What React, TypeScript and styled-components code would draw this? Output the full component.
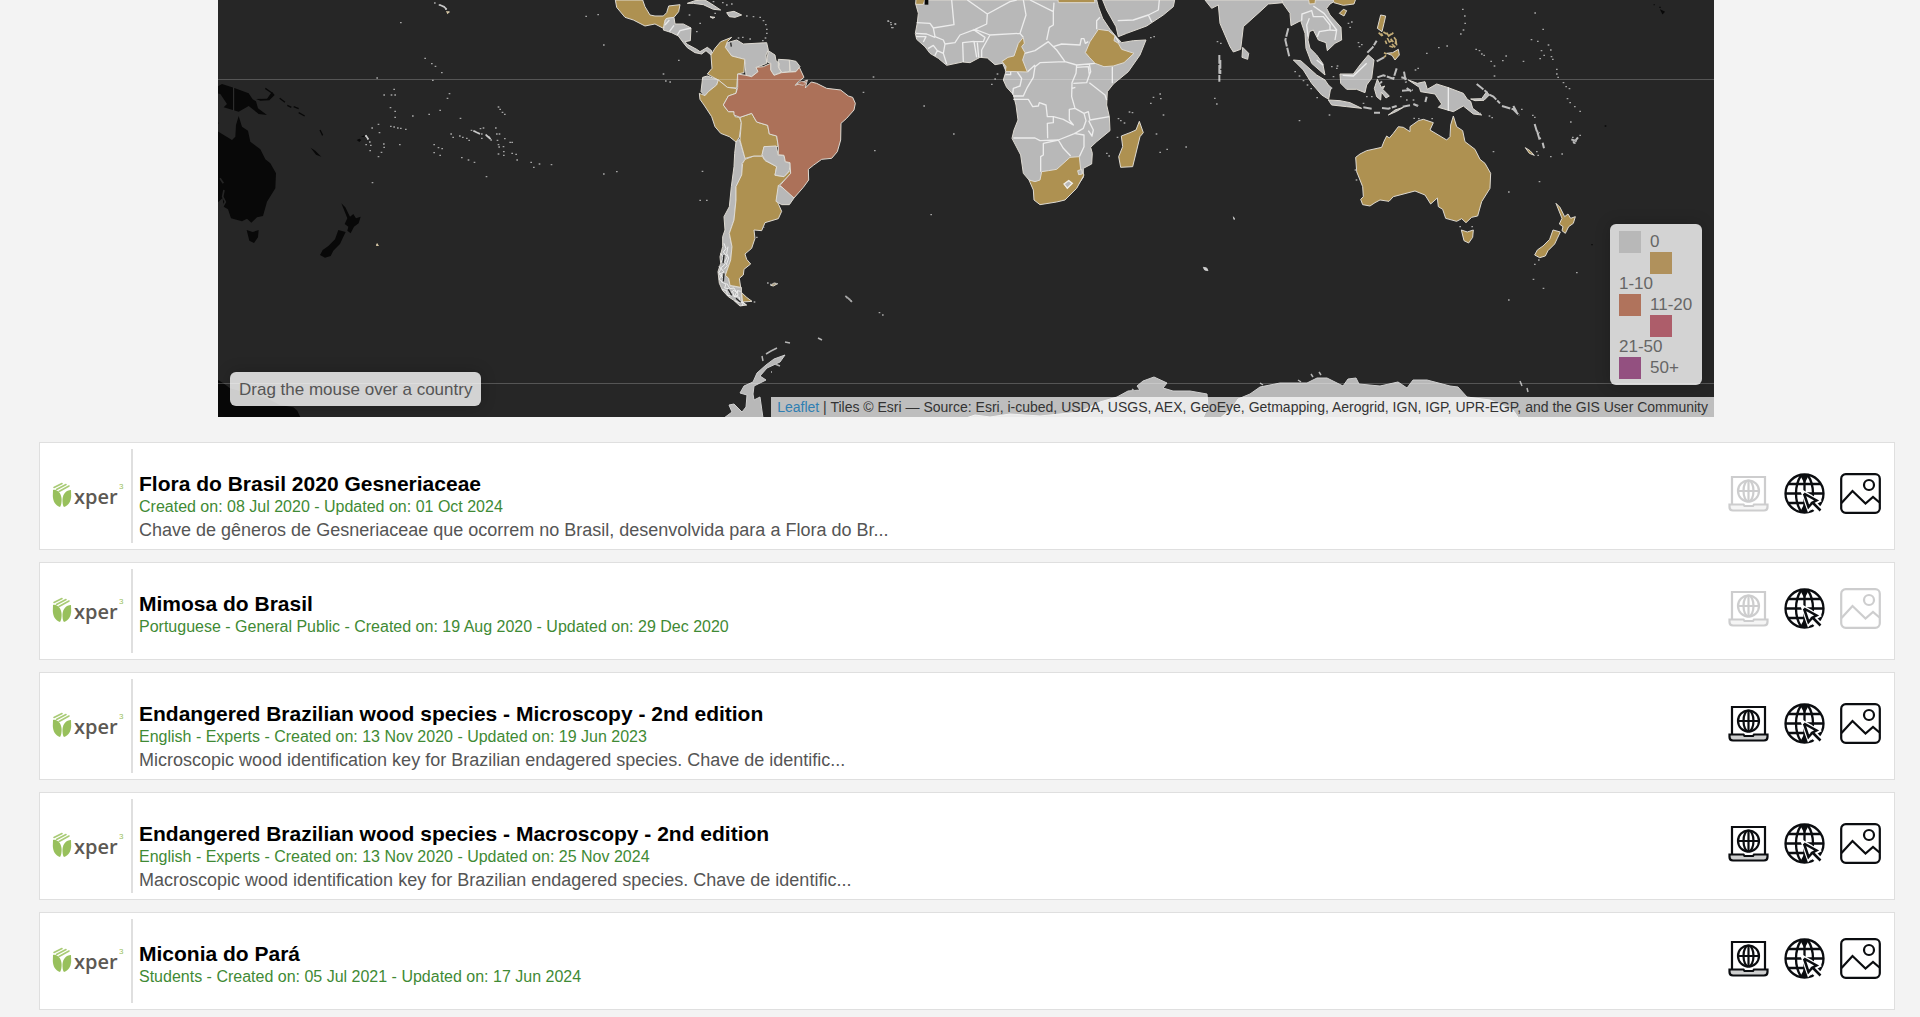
import React from "react";
import styled, { createGlobalStyle } from "styled-components";

const GlobalStyle = createGlobalStyle`
  * { box-sizing: border-box; }
  body {
    margin: 0;
    background: #f3f3f3;
    font-family: "Liberation Sans", Arial, Helvetica, sans-serif;
    color: #555;
  }
`;

const Page = styled.main`
  padding: 0 19px 7px 31px;
`;

const MapFrame = styled.section`
  position: relative;
  width: 80%;
  height: 417px;
  margin: 0 auto 25px;
  overflow: hidden;
  background: #262626;
  font-size: 17px;
`;

const MapCanvas = styled.svg`
  display: block;
  width: 100%;
  height: 100%;
`;

const MapPanel = styled.div`
  position: absolute;
  border-radius: 6px;
  background: rgba(255, 255, 255, 0.8);
  box-shadow: 0 0 16px rgba(0, 0, 0, 0.2);
`;

const CountryInfo = styled(MapPanel)`
  left: 12px;
  bottom: 11px;
  padding: 7px 9px 6px;
  line-height: 21px;
`;

const Legend = styled(MapPanel)`
  right: 12px;
  bottom: 32px;
  width: 92px;
  padding: 7px 9px;
  display: grid;
  grid-template-columns: 21px 1fr;
  column-gap: 10px;
  grid-auto-rows: 21px;
  line-height: 21px;
  color: #666;
  white-space: nowrap;
`;

const Swatch = styled.span<{ $color: string; $column: number }>`
  grid-column: ${(p) => p.$column};
  width: 22px;
  height: 22px;
  background: ${(p) => p.$color};
`;

const LegendLabel = styled.span<{ $full?: boolean }>`
  grid-column: ${(p) => (p.$full ? "1 / 3" : "2")};
`;

const Attribution = styled.div`
  position: absolute;
  right: 0;
  bottom: 0;
  padding: 1px 6px 0;
  background: rgba(255, 255, 255, 0.7);
  color: #333;
  font-size: 14px;
  line-height: 19px;
  white-space: nowrap;
  a { color: #2f7fb3; text-decoration: none; }
`;

const CardList = styled.ul`
  display: flex;
  flex-direction: column;
  gap: 12px;
  margin: 0 6px 0 8px;
  padding: 0;
  list-style: none;
`;

const Card = styled.li`
  display: flex;
  min-height: 98px;
  padding: 6px 13px 6px 0;
  border: 1px solid #dfdfdf;
  background: #fff;
`;

const LogoCell = styled.div`
  display: flex;
  align-items: center;
  justify-content: center;
  width: 93px;
  padding-left: 5px;
  border-right: 2px solid #dfdfdf;
`;

const Logo = styled.svg`
  width: 72px;
  height: 30px;
  overflow: visible;
`;

const CardBody = styled.div`
  flex: 1;
  padding: 23px 6px 1px;
`;

const CardTitle = styled.h3`
  margin: 0;
  color: #000;
  font-size: 21px;
  line-height: 24px;
`;

const CardMeta = styled.p`
  margin: 0;
  color: #3f8a35;
  font-size: 16px;
  line-height: 22px;
`;

const CardText = styled.p`
  margin: 0;
  font-size: 18px;
  line-height: 24px;
`;

const Actions = styled.div`
  display: flex;
  align-items: center;
  gap: 15px;
  padding-bottom: 5px;
`;

const IconButton = styled.button`
  width: 41px;
  height: 41px;
  padding: 0;
  border: 0;
  background: none;
  color: #0b0d10;
  cursor: pointer;
  svg { display: block; width: 100%; height: 100%; }
  &:disabled { opacity: 0.2; cursor: default; }
`;

const GREY = "#b8b8b8";
const GOLD = "#ae9151";
const CLAY = "#ac7159";

const AUSTRALIA =
  "M527 472L540 462 560 452 605 442 612 424 620 408 628 414 640 400 655 380 670 382 690 395 690 380 715 362 730 358 760 368 750 390 800 420 810 410 812 375 820 348 830 380 848 392 855 425 885 448 900 478 915 490 932 520 930 565 905 605 893 648 875 652 858 668 845 656 830 664 797 655 788 628 775 620 772 594 752 612 735 585 705 573 640 590 627 604 600 600 585 608 570 618 548 614 542 598 550 590 548 560 530 515ZM844 690L862 696 880 690 878 712 866 729 852 722Z";
const NEW_ZEALAND =
  "M1128 610L1140 622 1154 650 1164 642 1172 655 1186 650 1180 670 1166 680 1156 700 1146 692 1149 680 1138 672 1146 655ZM1119 690L1141 696 1132 715 1124 732 1104 752 1096 768 1079 773 1064 765 1072 750 1089 738 1109 718Z";
const NEW_GUINEA =
  "M685 240L712 250 735 245 742 268 770 252 805 263 850 280 862 298 872 304 878 325 905 345 880 342 850 318 820 335 775 322 785 312 765 282 722 275 718 262ZM872 297L905 296 920 275 928 285 912 301 885 302Z";

type Shape = { fill: string; d: string };

const AMERICAS: Shape[] = [
  { fill: GOLD, d: "M46 0L128 0 135 20 150 45 165 48 190 48 200 38 206 18 240 14 236 35 222 52 202 55 195 60 190 85 165 72 135 78 100 60 75 52 50 22Z" },
  { fill: GREY, d: "M198 56L222 52 225 72 250 72 273 84 271 122 255 125 262 133 290 148 300 155 322 142 335 152 333 165 318 152 305 162 285 158 262 143 250 128 235 108 215 98 190 90Z" },
  { fill: GREY, d: "M262 10L285 2 315 0 335 12 362 30 340 28 310 14 280 10ZM380 38L402 34 425 45 405 52 388 50ZM330 50L345 52 338 55Z" },
  { fill: GREY, d: "M382 128L410 120 430 132 465 130 500 128 505 150 498 165 500 190 470 202 474 215 455 230 438 226 434 178 395 168 376 142Z" },
  { fill: GOLD, d: "M395 112L362 125 345 145 333 165 336 205 322 222 355 240 382 262 410 264 413 222 432 218 434 178 395 168 376 142 382 125Z" },
  { fill: GREY, d: "M505 152L525 165 528 182 538 190 536 205 545 216 522 226 512 210 512 190 500 185ZM535 178L568 180 570 214 545 218 535 200ZM568 180L588 184 600 200 588 215 570 214Z" },
  { fill: GREY, d: "M308 232L322 228 355 240 350 255 325 275 315 287 303 275Z" },
  { fill: GOLD, d: "M298 280L315 287 325 275 350 255 355 240 382 262 410 266 408 280 385 288 370 315 385 335 402 335 405 350 418 352 424 368 418 412 408 426 388 410 362 400 345 380 335 350 312 315 300 298Z" },
  { fill: GREY, d: "M408 426L418 418 436 478 426 490 425 525 408 560 408 600 402 660 388 700 396 740 392 780 376 826 386 835 390 858 424 862 425 904 440 915 420 918 400 900 385 890 368 872 358 850 354 815 362 790 360 770 368 740 368 710 375 690 372 650 388 620 394 560 402 500 404 460Z" },
  { fill: GOLD, d: "M435 478L462 468 486 468 495 482 530 500 525 526 552 530 572 510 572 522 537 556 530 600 545 634 535 656 495 668 485 692 462 690 465 715 455 745 435 762 440 778 452 792 432 808 430 825 418 835 422 862 390 856 386 835 376 826 392 780 396 740 388 700 402 660 408 600 408 560 425 525 428 490ZM425 878L440 892 456 904 428 906Z" },
  { fill: GOLD, d: "M420 352L455 340 470 366 503 376 508 402 530 408 535 440 492 440 486 468 462 468 435 475 420 420 424 368Z" },
  { fill: GREY, d: "M492 440L528 438 535 466 552 466 556 485 570 490 568 512 552 530 525 525 530 500 495 480 486 464Z" },
  { fill: GREY, d: "M535 556L558 568 582 594 568 614 545 614 528 604Z" },
  { fill: CLAY, d: "M413 222L438 226 455 230 474 215 468 202 490 200 512 190 512 210 522 226 545 218 588 215 598 202 612 232 590 250 586 256 622 240 616 264 634 246 650 250 680 265 722 270 745 288 758 292 766 310 762 330 740 355 723 370 722 420 712 455 695 475 665 478 640 496 625 508 626 540 610 562 582 594 540 556 572 520 570 488 556 485 552 466 535 464 535 440 530 408 508 402 503 376 470 366 455 340 420 352 402 345 402 335 385 335 370 315 385 288 408 280 413 262Z" },
  { fill: GOLD, d: "M512 856L522 849 533 851 520 858Z" },
];

const AMERICA_BORDERS = "M222 76L208 95M273 84L240 92 232 105M208 60L195 75";

const CHILE_FJORDS =
  "M362 760l8 12-6 14 10 8-12 10 10 12-14 6 12 14-6 10 14 6-4 12 12 2 2 14 10-6 4 16 12-4-2-14 10 2M372 730l6 16-8 10 12 14-8 16 8 10-10 12M398 870l12 6-6 12 14 4 0 12 12 4-4 10M380 850l10 16 12-2 8 14M356 800l8 6-8 12 10 6-8 14 10 8M366 868l14 4 2 14 14 2M404 902l12 6 12-2 10 10M384 740l-4 20 6 14-6 18";

const AFRICA: Shape[] = [
  { fill: GREY, d: "M110 0L108 15 115 40 112 68 106 100 110 118 135 140 150 160 175 175 200 196 248 186 270 188 300 172 322 174 345 194 368 190 378 214 370 240 380 262 400 284 408 315 414 360 402 390 396 415 422 465 430 520 447 540 480 560 590 560 610 532 610 505 635 492 637 460 632 442 650 425 690 392 688 350 680 315 682 275 700 252 745 215 780 165 798 120 760 122 725 128 710 112 690 88 668 55 655 20 650 0Z" },
  { fill: GREY, d: "M668 0L680 30 708 80 715 110 740 100 800 78 850 45 880 20 884 0Z" },
  { fill: GOLD, d: "M533 -8L535 8 645 8 642 -8ZM108 -5L107 13 130 13 136 -5Z" },
  { fill: GOLD, d: "M430 112L433 130 425 140 435 158 428 180 442 216 376 214 378 200 366 184 384 172 402 168 415 130Z" },
  { fill: GOLD, d: "M655 88L685 92 705 108 702 122 715 130 725 148 762 160 732 188 700 198 672 200 645 190 628 172 616 158 630 125Z" },
  { fill: GOLD, d: "M447 540L465 545 480 540 485 515 505 512 530 508 570 472 598 470 602 508 612 525 590 565 555 600 530 606 480 614 462 600 460 570Z" },
  { fill: GREY, d: "M552 552L566 542 577 550 562 565ZM593 512L605 508 607 522 596 524Z" },
  { fill: GOLD, d: "M778 364L790 398 780 410 758 500 722 502 716 470 728 440 724 408 750 398 768 390Z" },
];

const AFRICA_BORDERS =
  "M215 0L222 74 160 84 150 70 110 68M262 0L322 42 320 72 285 88 240 105 225 128 195 132 190 160 200 192M322 42L390 5 410 0M430 0L438 45 420 100 330 105 285 88M450 0L520 35 520 75 508 82 500 120M520 35L522 8M160 84L165 110 190 120 195 132M108 100L140 102 165 112M108 110L138 110 130 126M144 146L160 136 172 152 164 168M172 152L190 160M250 186L248 128 282 124 290 172M296 172L292 128M305 172L305 150 330 105M280 88L315 112 310 125 282 124M420 100L430 112M434 160L465 152 505 125 530 150 555 185 480 188 465 200 460 232 442 262 430 288 400 288M520 140L545 132 600 135 604 116 612 116 616 130 625 125M555 185L590 195 645 190M590 195L588 220 576 248 575 290 585 325M588 202L625 200 628 225 620 248 580 250M697 200L697 250M628 248L675 285 680 300M574 266L586 262M628 192L632 215 628 225M400 298L445 298 458 320 475 318 478 308 498 315 502 350 520 350 520 368 502 370 503 415M400 414L465 414 480 422 535 420 585 400 610 385 618 362 612 340 585 325 568 328 568 360 580 375 550 358 520 350M612 340L625 335 630 360 688 350M626 362L640 390 636 408 625 392M582 400L612 405 612 440 598 470M535 420L550 445 572 468M535 420L490 430 490 465 482 470 482 515M376 224L392 224 392 215M412 216L425 235 420 258 400 265 398 284M442 216L465 195M713 62L760 60 805 45 835 30 838 0M805 45L815 66M650 88L650 62 660 52M705 108L718 128";

const ASIA: Shape[] = [
  { fill: GREY, d: "M75 0L95 25 115 15 120 70 150 140 160 156 182 148 190 80 240 35 265 12 310 8 310 0ZM188 142L206 160 203 178 186 172Z" },
  { fill: GREY, d: "M305 0L310 12 330 40 333 77 362 62 375 100 378 145 395 190 435 225 428 190 410 165 390 145 384 120 388 95 400 90 415 120 438 128 442 152 465 130 485 120 483 82 450 45 440 25 450 12 470 0Z" },
  { fill: GOLD, d: "M385 -5L388 12 405 11 407 -5ZM458 -5L462 8 490 16 522 12 528 -5ZM478 40L490 28 500 32 492 48ZM602 45L617 48 612 70 606 95 592 85ZM620 160L638 158 655 148 658 165 645 180 636 166Z" },
  { fill: GREY, d: "M340 180L362 182 410 225 435 240 452 265 446 298 425 285 395 250 370 210Z" },
  { fill: GREY, d: "M480 222L520 222 540 195 565 165 582 180 575 235 560 255 555 278 530 268 500 268 482 250Z" },
  { fill: GREY, d: "M445 300L480 302 510 308 545 325 500 320 455 315ZM592 238L604 262 614 258 608 268 628 288 618 294 604 276 602 300 590 290 583 265ZM625 345L645 330 670 322 650 334Z" },
  { fill: GREY, d: NEW_GUINEA },
  { fill: GOLD, d: AUSTRALIA },
  { fill: GOLD, d: NEW_ZEALAND },
  { fill: GOLD, d: "M1036 443L1050 452 1063 466 1048 460Z" },
];

const ASIA_BORDERS =
  "M365 62L366 42 395 32 400 50 430 50 450 75 450 90 418 95 412 110M400 18L432 40 470 90 465 120M388 55L380 75 384 110M450 90L470 92M488 226L520 228 560 190M805 262L805 332M410 180L430 196";

const ASIA_STRANDS =
  "M592 232L610 226 640 236 650 205M562 158L578 142 590 122M550 322L575 326M582 338L600 338M606 324L625 326 650 318M668 320L690 316M118 165L118 245M121 180L121 222M325 85L316 120 328 170M928 284L940 290 960 310M966 318L1000 328 1018 346M1000 318L1010 336M890 252L905 264 922 278M1064 372L1070 392 1078 400M1072 396L1078 416 1084 414M1088 428L1092 445M672 215L678 248M664 232L680 236M666 272L698 270M680 264L694 274M590 184L612 172M740 290L736 306M600 250L606 244M700 312L714 318M446 258L456 266M1174 418L1190 424M1180 430L1194 412";

const VISAYAS =
  "M596 98l10 10M604 100l4 8M620 98l6 10 8 -6M622 114l6 12 8-4M632 116l8 10M628 138l12 4M640 98l-6 6M642 112l6 8-2 12M616 122l4 10M636 132l10 10M610 96l10 6M648 124l2 12M612 158l8 4M618 166l-6 6";

/* Pairs of x and y, in thirds of a pixel from the left edge of each tile. */
const PACIFIC_ISLES = [
  704, 9, 718, 15, 730, 20, 737, 28, 745, 36, 602, 68, 675, 175, 695, 191, 706, 199, 725, 218, 698, 241, 531, 234, 582, 268, 552, 285, 574, 285, 585, 285, 571, 323, 585, 334, 585, 352, 638, 348, 687, 343, 720, 331, 742, 295, 748, 281, 781, 355, 572, 379, 582, 381, 593, 384, 602, 385, 617, 388, 535, 373, 516, 384, 538, 398, 497, 408, 503, 417, 509, 426, 512, 436, 498, 434, 510, 452, 551, 432, 552, 442, 544, 457, 535, 470, 599, 434, 517, 548, 531, 734, 702, 434, 715, 443, 726, 446, 702, 458, 720, 466, 753, 402, 759, 412, 779, 408, 788, 412, 800, 415, 807, 421, 814, 391, 824, 394, 836, 400, 841, 386, 850, 384, 845, 402, 845, 415, 858, 405, 866, 411, 873, 420, 887, 384, 890, 402, 898, 402, 892, 421, 895, 434, 897, 441, 914, 416, 910, 440, 911, 455, 895, 462, 911, 466, 930, 427, 936, 427, 936, 460, 948, 463, 951, 480, 785, 473, 805, 480, 823, 487, 859, 530, 993, 487, 1001, 502, 1018, 492, 1054, 494, 895, 321, 900, 328, 907, 337, 914, 343, 1158, 49, 1194, 44,
];
const ATLANTIC_ISLES = [
  190, 222, 197, 243, 210, 246, 236, 181, 11, 135, 11, 522, 50, 515, 307, 514, 300, 601, 320, 601, 368, 8, 380, 15, 395, 12, 340, 5, 440, 48, 460, 50, 480, 52, 490, 62, 497, 74, 500, 88, 500, 100, 496, 114, 488, 122, 450, 117, 428, 112, 415, 114, 865, 64, 873, 74, 886, 72, 875, 83, 820, 231, 790, 277, 824, 452, 503, 849, 512, 853, 521, 852, 530, 851, 740, 893, 748, 898, 753, 903, 838, 938, 848, 945, 594, 250, 602, 254, 610, 246, 618, 248, 463, 906, 470, 712, 490, 682, 290, 95, 300, 70, 268, 45, 345, 40,
];
const INDIAN_ISLES = [
  24, 63, 32, 68, 45, 72, 38, 83, 132, 318, 221, 402, 153, 644, 345, 237, 335, 253, 352, 222, 715, 356, 722, 362, 733, 369, 748, 336, 757, 338, 840, 282, 842, 296, 820, 292, 812, 310, 850, 345, 829, 402, 840, 457, 861, 448, 712, 412, 680, 460, 687, 468, 822, 110, 812, 113,
];
const EAST_ISLES = [
  112, 125, 122, 130, 104, 295, 110, 312, 18, 441, 358, 362, 448, 345, 162, 655, 76, 806, 345, 215, 358, 228, 370, 242, 382, 255, 393, 266, 411, 293, 505, 70, 515, 66, 510, 82, 535, 128, 545, 134, 538, 140, 455, 200, 470, 205, 460, 230, 472, 198, 740, 160, 776, 143, 801, 138, 888, 148, 898, 152, 905, 162, 912, 166, 933, 184, 943, 198, 943, 228, 978, 168, 968, 182, 1065, 39, 1089, 88, 1054, 119, 1073, 124, 1084, 152, 1080, 176, 1092, 166, 1105, 135, 1112, 150, 1114, 170, 1118, 178, 1030, 184, 1130, 208, 1130, 222, 1134, 232, 1150, 248, 1158, 260, 1168, 266, 1162, 296, 1170, 308, 1184, 320, 1200, 334, 1172, 366, 1178, 412, 1186, 420, 1184, 430, 1200, 406, 1180, 424, 848, 28, 854, 48, 855, 70, 850, 90, 842, 102, 940, 455, 1078, 545, 1112, 470, 1146, 462, 986, 576, 1064, 793, 1060, 838, 1090, 865, 1190, 818, 986, 900, 1058, 346, 1064, 352, 1070, 455, 1074, 466, 936, 353, 928, 348, 900, 340, 714, 205, 706, 210, 700, 300, 712, 316, 702, 355, 716, 356, 756, 356, 840, 680, 876, 680, 526, 510, 529, 540, 1025, 328, 662, 290, 680, 300, 560, 290, 575, 290, 550, 310, 1076, 780,
];

const isles = (points: number[]) => {
  let d = "";
  for (let i = 0; i < points.length; i += 2) d += `M${points[i] - 2} ${points[i + 1]}h5`;
  return d;
};

const ANTARCTICA =
  "M785 355L780 362 767 368 760 376 766 380 754 386 753 394 754 400 760 397 763 418 724 418 732 412 729 405 734 404 742 412 746 407 747 395 740 393 744 386 753 382 757 373 766 365 774 359Z" +
  "M960 420L975 415 990 417 1010 414 1040 416 1080 412 1100 402 1117 397 1128 391 1140 390 1137 386 1143 381 1154 377 1167 383 1163 388 1173 391 1190 391 1207 394 1208 407 1202 420Z" +
  "M1218 420L1232 408 1238 399 1250 394 1260 387 1280 383 1307 383 1317 378 1327 378 1343 386 1348 379 1356 378 1359 384 1380 386 1398 382 1407 388 1413 380 1427 380 1450 386 1458 387 1467 397 1490 400 1513 410 1520 420Z";

const Shapes = ({ items }: { items: Shape[] }) => (
  <>
    {items.map((s, i) => (
      <path key={i} d={s.d} fill={s.fill} stroke="#dedad2" strokeWidth="3" strokeLinejoin="round" />
    ))}
  </>
);

const Isles = ({ points }: { points: number[] }) => (
  <path d={isles(points)} stroke="#a5a5a5" strokeWidth="4" fill="none" />
);

const WorldMap = () => (
  <MapCanvas viewBox="218 0 1496 417" preserveAspectRatio="xMidYMax slice" role="img" aria-label="World map">
    <g transform="translate(200 0) scale(0.33333)">
      <g transform="translate(-704 0)" fill="#080808">
        <path d={AUSTRALIA} />
        <path d={NEW_ZEALAND} />
        <path d={NEW_GUINEA} />
        <path d="M1036 443L1050 452 1068 470 1052 464Z" />
        <path d="M943 295l16 12M966 316l12 6M985 320l15 6M1000 338l18 10M900 265l20 14M1064 390l8 16" stroke="#080808" strokeWidth="4" />
        <path d="M805 262V332" stroke="#333" strokeWidth="3" />
      </g>
      <path d="M54 1140L70 1150 90 1165 200 1195 240 1215 280 1222 292 1232 302 1254 54 1254ZM470 420l8-4 6 4-6 6zM483 410l10-4v5z" fill="#080808" />
      <path d="M60 535l10 15M72 570l-4 20 8 16-14 24" stroke="#262626" strokeWidth="5" fill="none" />
      <Isles points={PACIFIC_ISLES} />
      <path d="M718 14l14 6 8 8M497 406l8 12M820 392l20 10M858 405l14 12" stroke="#c8c8c8" strokeWidth="5" fill="none" />
      <path d="M738 33l12 2-8 8zM528 738l3-10 6 10z" fill="#d3c3a0" />
    </g>
    <path d={ANTARCTICA} fill={GREY} stroke="#cfcfcf" />
    <path d="M762 356l1 5M766 354l5-3 6-3M785 342l5 1M818 338l4 2M775 364l5 2M771 372h1M1132 389l4 3M1260 383l3 2M1298 380l3 2M1311 374l2 3M1319 372l2 3M1520 381l2 5M1527 388l1 4" stroke="#b5b5b5" strokeWidth="1.500" fill="none" />
    <g transform="translate(600 0) scale(0.33333)">
      <Shapes items={AMERICAS} />
      <path d={AMERICA_BORDERS} stroke="#e8e8e8" strokeWidth="4" fill="none" />
      <path d={CHILE_FJORDS} stroke="#ececec" strokeWidth="3" fill="none" />
      <path d="M372 765l-3 25M372 820l-2 24M385 868l10 18M408 895l14 12M392 128l2 12" stroke="#262626" strokeWidth="4" fill="none" />
      <Isles points={ATLANTIC_ISLES} />
      <path d="M736 888l10 8 10 10" stroke="#a5a5a5" strokeWidth="5" fill="none" />
      <path d="M590 252l14-8 14 4-8 8z" fill={CLAY} stroke="#dedad2" strokeWidth="2" />
    </g>
    <g transform="translate(880 0) scale(0.33333)">
      <Shapes items={AFRICA.slice(0, 2)} />
      <path d={AFRICA_BORDERS} stroke="#ececec" strokeWidth="4" fill="none" strokeLinejoin="round" />
      <Shapes items={AFRICA.slice(2)} />
      <path d="M552 552L566 542 577 550 562 565Z" stroke="#f0ece4" strokeWidth="4" fill="none" />
      <path d="M134 0h11v14h-11z" fill="#080808" />
      <Isles points={INDIAN_ISLES} />
    </g>
    <g transform="translate(1180 0) scale(0.33333)">
      <Shapes items={ASIA} />
      <path d={ASIA_BORDERS} stroke="#ececec" strokeWidth="4" fill="none" />
      <path d={ASIA_STRANDS} stroke="#bdbdbd" strokeWidth="6" strokeDasharray="26 4" fill="none" />
      <path d={VISAYAS} stroke="#c4ad78" strokeWidth="5" fill="none" />
      <Isles points={EAST_ISLES} />
      <path d="M70 802l10 2 4 8-10-2zM160 650l3 10" fill="#d0d0d0" stroke="#c8c8c8" strokeWidth="3" />
      <path d="M1421 14h3M1438 22h4M1444 32l8 4-4 4zM1274 378h5M1234 734h4" stroke="#080808" strokeWidth="4" fill="none" />
    </g>
    <path d="M218 79.5H1714M218 383.5H1714" stroke="#fff" strokeOpacity="0.22" />
  </MapCanvas>
);

const XperLogo = () => (
  <Logo viewBox="0 0 72 30" role="img" aria-label="xper3">
    <g fill="#98c05c">
      <path d="M1 9C5 8 9 12 9.500 17 10 21 9 25 8 26 3 24 1 20 .8 15Z" />
      <path d="M19 9C14 9 11 13 10.500 18 10.300 22 11 25 12 26 17 24 19 20 19.200 15Z" />
    </g>
    <path d="M2 6.500L10 2.500M4.500 8.500L14 3.500M7 10.500L17 5" stroke="#a9cb76" strokeWidth="1.600" strokeLinecap="round" />
    <text x="22" y="23" fill="#5d5953" fontFamily="'Open Sans', 'Noto Sans', sans-serif" fontWeight="600" fontSize="20">xper</text>
    <text x="67" y="8" fill="#98c05c" fontFamily="'Liberation Sans', sans-serif" fontSize="8">3</text>
  </Logo>
);

const LaptopIcon = () => (
  <svg viewBox="0 0 41 41" fill="none" stroke="currentColor" strokeWidth="2.200">
    <path d="M4 31V4H37V31" />
    <path d="M1.500 31.500H15.500L16.500 33H25L26 31.500H39.500V34Q39.500 37.500 36 37.500H5Q1.500 37.500 1.500 34Z" fill="currentColor" fillOpacity="0.2" />
    <circle cx="20.500" cy="18" r="10.500" />
    <ellipse cx="20.500" cy="18" rx="5" ry="10.500" />
    <path d="M10 18H31M20.500 7.500V28.500" />
  </svg>
);

const GlobeIcon = () => (
  <svg viewBox="0 0 41 41" fill="none" stroke="currentColor" strokeWidth="2.300">
    <circle cx="20.500" cy="20.500" r="19" />
    <path d="M4 11H37M1.500 20.500H39.500M4.500 30H37M20.500 1.500V39.500" />
    <path d="M17 2.500Q12 10 12 20.500T17 38.500M24 2.500Q29 10 29 20.500T24 38.500" />
    <path d="M17.500 38.500L20.500 33 23.500 38.500ZM17.500 2.500L20.500 8 23.500 2.500Z" fill="currentColor" />
    <path d="M20 20.500L33 28 29.500 30 36.500 37 34.500 38.500 28 32 25 35Z" stroke="#fff" strokeWidth="5" fill="#fff" />
    <path d="M20 20.500L32.500 27.500 28.500 29.500 36.500 37.500M28.500 29.500L24.500 34 20 20.500" strokeWidth="2.500" />
  </svg>
);

const PictureIcon = () => (
  <svg viewBox="0 0 41 41" fill="none" stroke="currentColor" strokeWidth="2.200">
    <rect x="1.200" y="1.200" width="38.600" height="38.600" rx="4.500" />
    <circle cx="29" cy="12" r="5" />
    <path d="M1.500 30L12.500 18 25.500 30.500 33 24 39.500 29.500" />
  </svg>
);

type Entry = { title: string; meta: string; text?: string; laptop: boolean; picture: boolean };

const ENTRIES: Entry[] = [
  {
    title: "Flora do Brasil 2020 Gesneriaceae",
    meta: "Created on: 08 Jul 2020 - Updated on: 01 Oct 2024",
    text: "Chave de gêneros de Gesneriaceae que ocorrem no Brasil, desenvolvida para a Flora do Br...",
    laptop: false,
    picture: true,
  },
  {
    title: "Mimosa do Brasil",
    meta: "Portuguese - General Public - Created on: 19 Aug 2020 - Updated on: 29 Dec 2020",
    laptop: false,
    picture: false,
  },
  {
    title: "Endangered Brazilian wood species - Microscopy - 2nd edition",
    meta: "English - Experts - Created on: 13 Nov 2020 - Updated on: 19 Jun 2023",
    text: "Microscopic wood identification key for Brazilian endagered species. Chave de identific...",
    laptop: true,
    picture: true,
  },
  {
    title: "Endangered Brazilian wood species - Macroscopy - 2nd edition",
    meta: "English - Experts - Created on: 13 Nov 2020 - Updated on: 25 Nov 2024",
    text: "Macroscopic wood identification key for Brazilian endagered species. Chave de identific...",
    laptop: true,
    picture: true,
  },
  {
    title: "Miconia do Pará",
    meta: "Students - Created on: 05 Jul 2021 - Updated on: 17 Jun 2024",
    laptop: true,
    picture: true,
  },
];

export default function App() {
  return (
    <Page>
      <GlobalStyle />
      <MapFrame>
        <WorldMap />
        <CountryInfo>Drag the mouse over a country</CountryInfo>
        <Legend>
          <Swatch $color="#b8b8b8" $column={1} />
          <LegendLabel>0</LegendLabel>
          <Swatch $color="#b0915c" $column={2} />
          <LegendLabel $full>1-10</LegendLabel>
          <Swatch $color="#b0735c" $column={1} />
          <LegendLabel>11-20</LegendLabel>
          <Swatch $color="#ad5d6a" $column={2} />
          <LegendLabel $full>21-50</LegendLabel>
          <Swatch $color="#935080" $column={1} />
          <LegendLabel>50+</LegendLabel>
        </Legend>
        <Attribution>
          <a href="#leaflet">Leaflet</a> | Tiles © Esri — Source: Esri, i-cubed, USDA, USGS, AEX, GeoEye, Getmapping,
          Aerogrid, IGN, IGP, UPR-EGP, and the GIS User Community
        </Attribution>
      </MapFrame>
      <CardList>
        {ENTRIES.map((e) => (
          <Card key={e.title}>
            <LogoCell>
              <XperLogo />
            </LogoCell>
            <CardBody>
              <CardTitle>{e.title}</CardTitle>
              <CardMeta>{e.meta}</CardMeta>
              {e.text && <CardText>{e.text}</CardText>}
            </CardBody>
            <Actions>
              <IconButton type="button" aria-label="Open in the application" disabled={!e.laptop}>
                <LaptopIcon />
              </IconButton>
              <IconButton type="button" aria-label="Open online">
                <GlobeIcon />
              </IconButton>
              <IconButton type="button" aria-label="View pictures" disabled={!e.picture}>
                <PictureIcon />
              </IconButton>
            </Actions>
          </Card>
        ))}
      </CardList>
    </Page>
  );
}
